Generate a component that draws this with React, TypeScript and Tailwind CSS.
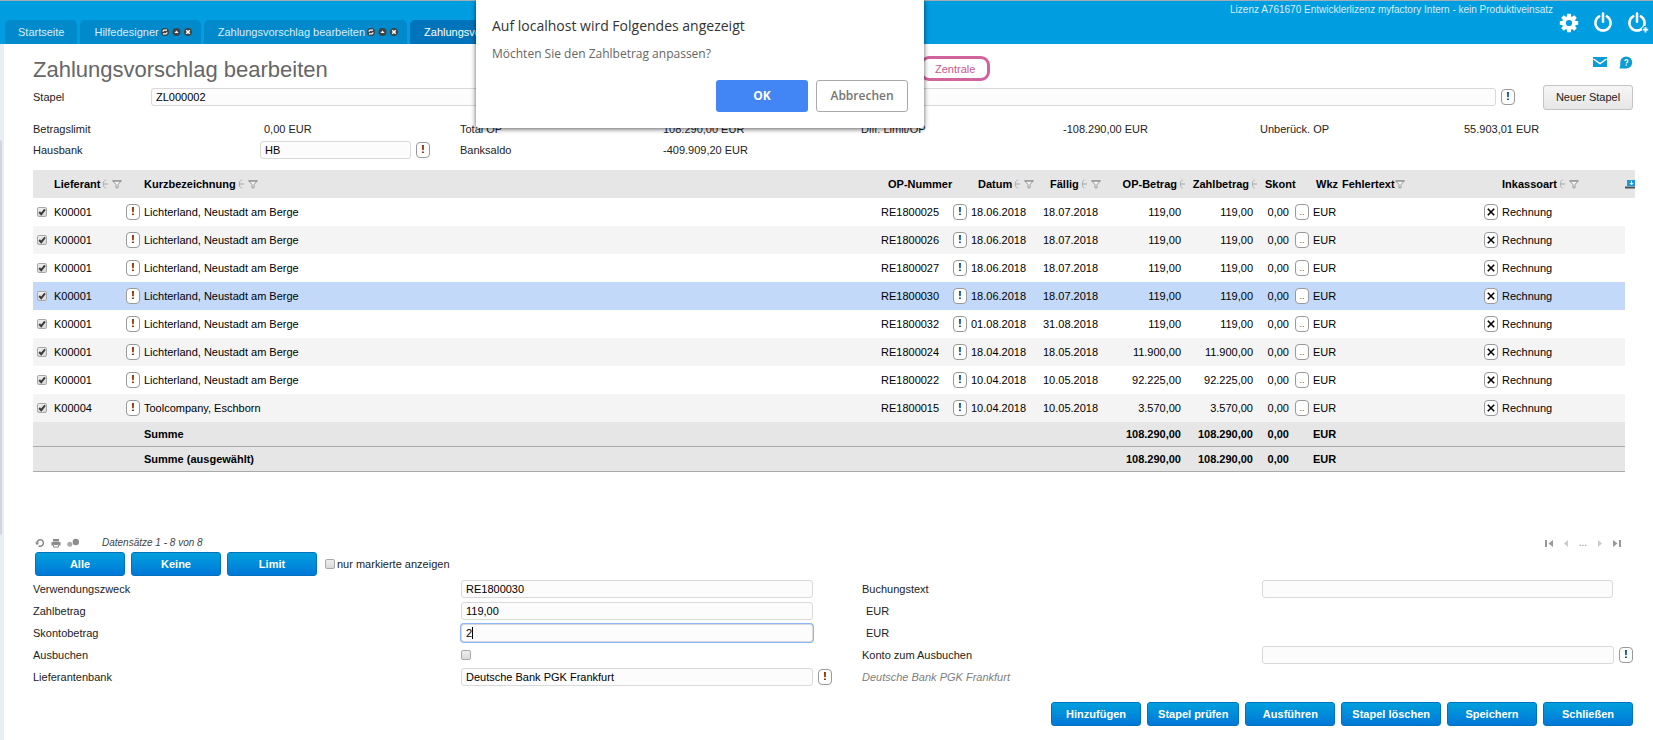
import { useState, type InputHTMLAttributes, type ReactNode } from 'react'
import clsx from 'clsx'

const tabs = [
  { label: 'Startseite', closable: false },
  { label: 'Hilfedesigner', closable: true },
  { label: 'Zahlungsvorschlag bearbeiten', closable: true },
  { label: 'Zahlungsvorschlag bearbeiten', closable: true, active: true },
]

const LICHTERLAND = 'Lichterland, Neustadt am Berge'

const positions = [
  { supplier: 'K00001', name: LICHTERLAND, no: 'RE1800025', date: '18.06.2018', due: '18.07.2018', amount: '119,00' },
  { supplier: 'K00001', name: LICHTERLAND, no: 'RE1800026', date: '18.06.2018', due: '18.07.2018', amount: '119,00' },
  { supplier: 'K00001', name: LICHTERLAND, no: 'RE1800027', date: '18.06.2018', due: '18.07.2018', amount: '119,00' },
  { supplier: 'K00001', name: LICHTERLAND, no: 'RE1800030', date: '18.06.2018', due: '18.07.2018', amount: '119,00' },
  { supplier: 'K00001', name: LICHTERLAND, no: 'RE1800032', date: '01.08.2018', due: '31.08.2018', amount: '119,00' },
  { supplier: 'K00001', name: LICHTERLAND, no: 'RE1800024', date: '18.04.2018', due: '18.05.2018', amount: '11.900,00' },
  { supplier: 'K00001', name: LICHTERLAND, no: 'RE1800022', date: '10.04.2018', due: '10.05.2018', amount: '92.225,00' },
  { supplier: 'K00004', name: 'Toolcompany, Eschborn', no: 'RE1800015', date: '10.04.2018', due: '10.05.2018', amount: '3.570,00' },
]

const actions = ['Hinzufügen', 'Stapel prüfen', 'Ausführen', 'Stapel löschen', 'Speichern', 'Schließen']

function TabIcons() {
  return (
    <svg width="34" height="10" viewBox="0 0 34 10" aria-hidden>
      <g fill="#3f4346">
        <circle cx="6" cy="5" r="4" />
        <circle cx="17.5" cy="5" r="4" />
        <circle cx="29" cy="5" r="4" />
      </g>
      <g fill="none" stroke="#fff" strokeWidth="1.2">
        <path d="M8 3.2H5.2Q4 3.4 4 4.8M4 6.8h2.8Q8 6.6 8 5.2" />
        <path d="M27.2 3.2l3.6 3.6M30.8 3.2l-3.6 3.6" strokeWidth="1.5" />
      </g>
      <path d="M15.5 6l2-2.4 2 2.4z" fill="#fff" />
    </svg>
  )
}

function GearIcon() {
  return (
    <svg width="20" height="20" viewBox="0 0 20 20" aria-hidden>
      <g fill="#fff">
        {[0, 45, 90, 135, 180, 225, 270, 315].map((angle) => (
          <path key={angle} d="M7.6 5l.6-4.2h3.6l.6 4.2z" transform={`rotate(${angle} 10 10)`} />
        ))}
      </g>
      <circle cx="10" cy="10" r="4.9" fill="none" stroke="#fff" strokeWidth="3.6" />
    </svg>
  )
}

function PowerIcon({ plus }: { plus?: boolean }) {
  return (
    <svg width="22" height="22" viewBox="0 0 22 22" aria-hidden>
      <path d="M6.2 4.4a7.6 7.6 0 1 0 7.6 0" fill="none" stroke="#fff" strokeWidth="2.5" strokeLinecap="round" />
      <path d="M10 1.5v8.2" stroke="#fff" strokeWidth="2.5" strokeLinecap="round" />
      {plus && (
        <>
          <path d="M18.5 14v7M15 17.5h7" stroke="#009de0" strokeWidth="4" />
          <path d="M18.5 15v5.4M15.8 17.7h5.4" stroke="#fff" strokeWidth="1.8" />
        </>
      )}
    </svg>
  )
}

function SortIcon() {
  return (
    <svg width="6" height="10" viewBox="0 0 6 10" aria-hidden className="ml-0.5 shrink-0">
      <path d="M3.6.5L1.4 3v4l2.2 2.5" fill="none" stroke="#b0b0b0" />
      <path d="M1.5 5H6" stroke="#a3a3a3" />
    </svg>
  )
}

function FilterIcon({ className }: { className?: string }) {
  return (
    <svg width="10" height="9" viewBox="0 0 10 9" aria-hidden className={clsx('shrink-0', className)}>
      <path d="M.8.8h8.4L6 4.6v3.2H4V4.6z" fill="#f3f3f3" stroke="#999" />
      <path d="M.5 1h9" stroke="#999" strokeWidth="1.4" />
    </svg>
  )
}

function Check({ className, ...props }: InputHTMLAttributes<HTMLInputElement>) {
  return (
    <span className={clsx('grid w-fit', className)}>
      <input
        type="checkbox"
        className="peer col-start-1 row-start-1 size-[10px] appearance-none rounded-[2px] border border-[#a9a9a9] bg-gradient-to-b from-[#eeeeee] to-[#d9d9d9]"
        {...props}
      />
      <svg
        viewBox="0 0 10 10"
        aria-hidden
        className="pointer-events-none col-start-1 row-start-1 hidden size-[10px] peer-checked:block"
      >
        <path d="M2.2 5l2 2.2L8 2.4" fill="none" stroke="#3c3c3c" strokeWidth="2" />
      </svg>
    </span>
  )
}

function SmallButton({ label, children, className }: { label: string; children: ReactNode; className?: string }) {
  return (
    <button
      type="button"
      aria-label={label}
      className={clsx(
        'flex h-4 w-[14px] shrink-0 items-center justify-center rounded-[4px] border border-[#999] bg-white leading-none',
        className,
      )}
    >
      {children}
    </button>
  )
}

function Lookup({ label, className }: { label: string; className?: string }) {
  return (
    <SmallButton label={label} className={clsx('text-[10px] font-bold text-black', className)}>
      !
    </SmallButton>
  )
}

function Field({ className, ...props }: InputHTMLAttributes<HTMLInputElement>) {
  return (
    <input
      type="text"
      className={clsx(
        'h-[18px] min-w-0 rounded-[3px] border border-[#d9d9d9] bg-[#fcfcfc] px-1 text-[11px] text-black outline-none',
        className,
      )}
      {...props}
    />
  )
}

function BlueButton({ children }: { children: ReactNode }) {
  return (
    <button
      type="button"
      className="h-6 min-w-[90px] rounded-[3px] border border-[#0072bc] bg-gradient-to-b from-[#00a0dc] to-[#0077d8] px-2.5 text-[11px] font-bold text-white"
    >
      {children}
    </button>
  )
}

function Header() {
  return (
    <header className="flex h-11 justify-between border-t border-[#a5adb3] bg-[#009de0]">
      <nav className="flex items-end gap-[3px] pl-[5px]">
        {tabs.map((tab, i) => (
          <a
            key={i}
            href="#"
            className={clsx(
              'flex h-6 items-center rounded-t-[5px] text-[11px] whitespace-nowrap',
              tab.closable ? 'pr-2 pl-[14px]' : 'px-[13px]',
              tab.active ? 'bg-[#0074ba] text-white' : 'bg-[#008acb] text-[#d9edf8]',
            )}
          >
            {tab.label}
            {tab.closable && <TabIcons />}
          </a>
        ))}
      </nav>
      <div className="flex pr-1">
        <span className="pt-[3px] text-[10px] leading-3 text-[#d9edf8]">
          Lizenz A761670 Entwicklerlizenz myfactory Intern - kein Produktiveinsatz
        </span>
        <div className="ml-1.5 flex items-center gap-3">
          <button type="button" aria-label="Einstellungen" className="mr-0.5"><GearIcon /></button>
          <button type="button" aria-label="Abmelden"><PowerIcon /></button>
          <button type="button" aria-label="Neu anmelden"><PowerIcon plus /></button>
        </div>
      </div>
    </header>
  )
}

function Summary() {
  return (
    <div className="mt-2 grid auto-rows-[21px] grid-cols-[227fr_200fr_203fr_198fr_202fr_197fr_204fr_169fr] items-center">
      <span>Betragslimit</span>
      <span className="pl-1">0,00 EUR</span>
      <span>Total OP</span>
      <span>108.290,00 EUR</span>
      <span>Diff. Limit/OP</span>
      <span>-108.290,00 EUR</span>
      <span>Unberück. OP</span>
      <span>55.903,01 EUR</span>
      <label htmlFor="hausbank">Hausbank</label>
      <span className="flex items-center gap-[5px]">
        <Field id="hausbank" defaultValue="HB" className="w-[151px]" />
        <Lookup label="Hausbank wählen" />
      </span>
      <span>Banksaldo</span>
      <span>-409.909,20 EUR</span>
    </div>
  )
}

function HeadCell({ children, className, sort, filter }: {
  children?: ReactNode
  className?: string
  sort?: boolean
  filter?: boolean
}) {
  return (
    <th className="bg-[#e6e6e6] p-0 text-left whitespace-nowrap">
      <span className={clsx('flex items-center', className)}>
        {children}
        {sort && <SortIcon />}
        {filter && <FilterIcon className={sort ? 'ml-1' : ''} />}
      </span>
    </th>
  )
}

function PositionTable() {
  const [selected, setSelected] = useState('RE1800030')

  return (
    <table className="mt-[10px] w-full table-fixed border-separate border-spacing-0 text-black">
      <colgroup>
        <col className="w-[21px]" />
        <col className="w-[70px]" />
        <col className="w-[20px]" />
        <col />
        <col className="w-[70px]" />
        <col className="w-[20px]" />
        <col className="w-[72px]" />
        <col className="w-[66px]" />
        <col className="w-[76px]" />
        <col className="w-[72px]" />
        <col className="w-[36px]" />
        <col className="w-[20px]" />
        <col className="w-[29px]" />
        <col className="w-[140px]" />
        <col className="w-[20px]" />
        <col className="w-[123px]" />
        <col className="w-[10px]" />
      </colgroup>
      <thead>
        <tr className="h-7">
          <HeadCell />
          <HeadCell sort filter>Lieferant</HeadCell>
          <HeadCell />
          <HeadCell sort filter>Kurzbezeichnung</HeadCell>
          <HeadCell className="pl-[7px]">OP-Nummer</HeadCell>
          <HeadCell />
          <HeadCell className="pl-[7px]" sort filter>Datum</HeadCell>
          <HeadCell className="pl-[7px]" sort filter>Fällig</HeadCell>
          <HeadCell className="justify-end" sort>OP-Betrag</HeadCell>
          <HeadCell className="justify-end" sort>Zahlbetrag</HeadCell>
          <HeadCell className="pl-2">Skont</HeadCell>
          <HeadCell />
          <HeadCell className="pl-[3px]">Wkz</HeadCell>
          <HeadCell filter>Fehlertext</HeadCell>
          <HeadCell />
          <HeadCell sort filter>Inkassoart</HeadCell>
          <HeadCell>
            <svg width="10" height="9" viewBox="0 0 10 9" aria-hidden>
              <path d="M2 0h8v6H2z" fill="#1c9ad6" />
              <path d="M6.5.8v3.4M4.8 3l1.7 1.8L8.2 3" stroke="#fff" fill="none" />
              <path d="M0 7.5h10" stroke="#44545e" strokeWidth="2" />
            </svg>
          </HeadCell>
        </tr>
      </thead>
      <tbody>
        {positions.map((p) => (
          <tr
            key={p.no}
            onClick={() => setSelected(p.no)}
            className={clsx(
              'h-7 [&>td]:p-0',
              p.no === selected
                ? '[&>td:not(:last-child)]:bg-[#c3d9fa]'
                : 'even:[&>td:not(:last-child)]:bg-[#f4f4f4]',
            )}
          >
            <td>
              <Check defaultChecked aria-label={`${p.no} auswählen`} className="ml-1" />
            </td>
            <td>{p.supplier}</td>
            <td><Lookup label="Lieferant öffnen" className="ml-0.5" /></td>
            <td>{p.name}</td>
            <td>{p.no}</td>
            <td><Lookup label="Beleg öffnen" className="ml-0.5" /></td>
            <td>{p.date}</td>
            <td>{p.due}</td>
            <td className="text-right"><span className="pr-1">{p.amount}</span></td>
            <td className="text-right"><span className="pr-1">{p.amount}</span></td>
            <td className="text-right"><span className="pr-1">0,00</span></td>
            <td>
              <SmallButton label="Skonto bearbeiten" className="ml-0.5 text-[9px] text-[#555]">..</SmallButton>
            </td>
            <td>EUR</td>
            <td />
            <td>
              <SmallButton label="Inkassoart entfernen" className="ml-0.5">
                <svg width="8" height="8" viewBox="0 0 8 8" aria-hidden>
                  <path d="M.8.8l6.4 6.4M7.2.8L.8 7.2" stroke="#000" strokeWidth="1.6" />
                </svg>
              </SmallButton>
            </td>
            <td>Rechnung</td>
            <td />
          </tr>
        ))}
      </tbody>
      <tfoot className="font-bold">
        {['Summe', 'Summe (ausgewählt)'].map((label) => (
          <tr
            key={label}
            className="h-[25px] [&>td]:p-0 [&>td:not(:last-child)]:border-b [&>td:not(:last-child)]:border-[#aaa] [&>td:not(:last-child)]:bg-[#e6e6e6]"
          >
            <td colSpan={3} />
            <td>{label}</td>
            <td colSpan={4} />
            <td className="text-right"><span className="pr-1">108.290,00</span></td>
            <td className="text-right"><span className="pr-1">108.290,00</span></td>
            <td className="text-right"><span className="pr-1">0,00</span></td>
            <td />
            <td>EUR</td>
            <td colSpan={3} />
            <td />
          </tr>
        ))}
      </tfoot>
    </table>
  )
}

function TableTools() {
  return (
    <div className="mt-[63px] flex h-4 items-center justify-between pr-8">
      <div className="flex items-center pl-0.5">
        <button type="button" aria-label="Aktualisieren">
          <svg width="10" height="10" viewBox="0 0 10 10" aria-hidden>
            <path d="M2 5.2a3.2 3.2 0 1 1 1.6 2.6" fill="none" stroke="#888" strokeWidth="1.5" />
            <path d="M0 4.6h4.2L2 7.2z" fill="#888" />
          </svg>
        </button>
        <button type="button" aria-label="Drucken" className="ml-1.5">
          <svg width="10" height="10" viewBox="0 0 10 10" aria-hidden>
            <path d="M2 1h6v2.5H2zM.5 4h9v3.5H8V6H2v1.5H.5z" fill="#888" />
            <path d="M2.5 6.5h5V9h-5z" fill="#fff" stroke="#888" />
          </svg>
        </button>
        <button type="button" aria-label="Optionen" className="ml-1.5">
          <svg width="12" height="10" viewBox="0 0 12 10" aria-hidden>
            <circle cx="2.8" cy="6.2" r="2.5" fill="#aaa" />
            <circle cx="8.8" cy="4" r="3.2" fill="#8c8c8c" />
          </svg>
        </button>
        <span className="ml-[23px] text-[10px] text-[#444] italic">Datensätze 1 - 8 von 8</span>
      </div>
      <div className="flex items-center gap-[11px]">
        <button type="button" aria-label="Erste Seite">
          <svg width="8" height="7" viewBox="0 0 8 7" aria-hidden>
            <path d="M0 0h2v7H0zM8 0v7L3.5 3.5z" fill="#999" />
          </svg>
        </button>
        <button type="button" aria-label="Vorherige Seite">
          <svg width="4" height="7" viewBox="0 0 4 7" aria-hidden><path d="M4 0v7L0 3.5z" fill="#ccc" /></svg>
        </button>
        <span className="text-[10px] text-[#888]">...</span>
        <button type="button" aria-label="Nächste Seite">
          <svg width="4" height="7" viewBox="0 0 4 7" aria-hidden><path d="M0 0v7l4-3.5z" fill="#ccc" /></svg>
        </button>
        <button type="button" aria-label="Letzte Seite">
          <svg width="8" height="7" viewBox="0 0 8 7" aria-hidden>
            <path d="M6 0h2v7H6zM0 0v7l4.5-3.5z" fill="#999" />
          </svg>
        </button>
      </div>
    </div>
  )
}

function DetailForm() {
  return (
    <form className="mt-0.5 grid auto-rows-[22px] grid-cols-[428fr_401fr_400fr_371fr] items-center">
      <label htmlFor="zweck">Verwendungszweck</label>
      <Field id="zweck" defaultValue="RE1800030" className="mr-[49px]" />
      <label htmlFor="buchungstext">Buchungstext</label>
      <Field id="buchungstext" className="mr-5" />

      <label htmlFor="zahlbetrag">Zahlbetrag</label>
      <Field id="zahlbetrag" defaultValue="119,00" className="mr-[49px]" />
      <span className="col-span-2 pl-1">EUR</span>

      <label htmlFor="skontobetrag">Skontobetrag</label>
      <span className="relative mr-[49px] flex">
        <Field
          id="skontobetrag"
          defaultValue="2"
          className="flex-1 border-[#7aa7f0] ring-1 ring-[#8db6f7]"
        />
        <span aria-hidden className="absolute top-[3px] left-[11px] h-3 w-px bg-black" />
      </span>
      <span className="col-span-2 pl-1">EUR</span>

      <label htmlFor="ausbuchen">Ausbuchen</label>
      <Check id="ausbuchen" />
      <label htmlFor="konto">Konto zum Ausbuchen</label>
      <span className="flex items-center gap-[5px]">
        <Field id="konto" className="flex-1" />
        <Lookup label="Konto wählen" />
      </span>

      <label htmlFor="bank">Lieferantenbank</label>
      <span className="mr-[30px] flex items-center gap-[5px]">
        <Field id="bank" defaultValue="Deutsche Bank PGK Frankfurt" className="flex-1" />
        <Lookup label="Lieferantenbank wählen" />
      </span>
      <span className="col-span-2 text-[#808080] italic">Deutsche Bank PGK Frankfurt</span>
    </form>
  )
}

function ConfirmDialog() {
  return (
    <div
      role="dialog"
      aria-labelledby="confirm-title"
      className="absolute top-0 left-[476px] w-[448px] rounded-b-[3px] bg-white px-4 pb-4 font-['Open_Sans','Noto_Sans',sans-serif] shadow-[0_1px_5px_rgba(0,0,0,0.65)]"
    >
      <h2 id="confirm-title" className="pt-4 text-[14px] leading-5 text-[#333]">
        Auf localhost wird Folgendes angezeigt
      </h2>
      <p className="mt-2 text-[12px] leading-5 text-[#666]">Möchten Sie den Zahlbetrag anpassen?</p>
      <div className="mt-4 flex justify-end gap-2">
        <button type="button" className="h-8 w-[92px] rounded-[3px] bg-[#4285f4] text-[12px] font-bold text-white">
          OK
        </button>
        <button
          type="button"
          className="h-8 w-[92px] rounded-[3px] border border-[#aaa] bg-white text-[12px] font-semibold text-[#757575]"
        >
          Abbrechen
        </button>
      </div>
    </div>
  )
}

export default function App() {
  return (
    <div className="relative flex min-h-screen flex-col bg-white font-['Liberation_Sans',Arial,sans-serif] text-[11px] leading-4 text-[#222]">
      <Header />
      <div className="flex flex-1">
        <div className="w-1 shrink-0 bg-[#e9eef3] pt-24">
          <div className="h-[395px] w-0.5 rounded-r-[2px] bg-[#d3d6da]" />
        </div>
        <main className="min-w-0 flex-1 pb-3.5 pl-[29px]">
          <div className="pr-5">
            <div className="grid h-10 grid-cols-[887fr_713fr] pt-3">
              <h1 className="text-[22px] leading-7 text-[#666]">Zahlungsvorschlag bearbeiten</h1>
              <div className="flex items-start justify-between">
                <span className="flex h-[25px] items-center rounded-[9px] border-3 border-[#d0649b] px-3 text-[#c9578f]">
                  Zentrale
                </span>
                <div className="flex gap-3">
                  <a href="#" aria-label="Nachricht">
                    <svg width="14" height="13" viewBox="0 0 14 13" aria-hidden>
                      <path d="M0 1h14v10H0z" fill="#0b9bd9" />
                      <path d="M.5 3L7 7.6 13.5 3" fill="none" stroke="#fff" strokeWidth="1.5" />
                    </svg>
                  </a>
                  <a href="#" aria-label="Hilfe">
                    <svg width="14" height="13" viewBox="0 0 14 13" aria-hidden>
                      <circle cx="7.2" cy="6.5" r="6" fill="#0b9bd9" />
                      <path d="M.6 12.5l1-5 5 5z" fill="#0b9bd9" />
                      <path d="M5.9 5a1.5 1.4 0 1 1 2.2 1.3q-.8.4-.8 1.1" fill="none" stroke="#fff" strokeWidth="1.3" />
                      <circle cx="7.3" cy="9" r=".8" fill="#fff" />
                    </svg>
                  </a>
                </div>
              </div>
            </div>
            <div className="flex h-[26px] items-center">
              <label htmlFor="stapel" className="w-[118px]">Stapel</label>
              <Field id="stapel" defaultValue="ZL000002" className="mr-[5px] flex-1" />
              <Lookup label="Stapel wählen" />
              <button
                type="button"
                className="ml-7 h-[25px] w-[90px] rounded-[3px] border border-[#c4c4c4] bg-gradient-to-b from-[#f6f6f6] to-[#e6e6e6]"
              >
                Neuer Stapel
              </button>
            </div>
            <Summary />
          </div>
          <div className="pr-[18px]">
            <PositionTable />
          </div>
          <TableTools />
          <div className="mt-px flex h-6 items-center gap-1.5 pl-0.5">
            <BlueButton>Alle</BlueButton>
            <BlueButton>Keine</BlueButton>
            <BlueButton>Limit</BlueButton>
            <label className="ml-0.5 flex items-center gap-0.5">
              <Check />
              nur markierte anzeigen
            </label>
          </div>
          <div className="pr-5">
            <DetailForm />
            <div className="mt-3.5 flex justify-end gap-1.5">
              {actions.map((action) => (
                <BlueButton key={action}>{action}</BlueButton>
              ))}
            </div>
          </div>
        </main>
      </div>
      <ConfirmDialog />
    </div>
  )
}
